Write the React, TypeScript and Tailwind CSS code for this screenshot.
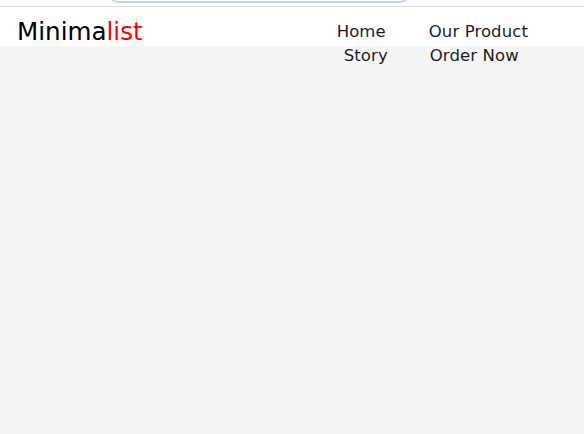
export default function App() {
  return (
    <div className="min-h-[434px] bg-[#f4f4f4] font-['DejaVu_Sans',sans-serif]">
      {/* search bar remnant at top */}
      <div className="h-[6px] overflow-hidden bg-white">
        <div className="-mt-[18px] ml-[108px] h-[21px] w-[302px] rounded-[10px] border-2 border-[#bdd6f7]" />
      </div>
      <div className="h-px bg-[#dcdcdc]" />
      <header className="flex h-[39px] items-start justify-between bg-white pl-[17px] pr-[56px]">
        <h1 className="mt-[10px] text-[24.6px] leading-[30px] text-black">
          Minima<span className="text-[#ff0000]">list</span>
        </h1>
        <nav className="mt-[13px] grid grid-cols-[auto_auto] gap-x-[41px] text-[16.5px] leading-[24px] tracking-[0.1px] text-[#1c1c1c]">
          <a className="pr-[2px] text-right">Home</a>
          <a>Our Product</a>
          <a className="text-right">Story</a>
          <a className="pl-px">Order Now</a>
        </nav>
      </header>
    </div>
  );
}
